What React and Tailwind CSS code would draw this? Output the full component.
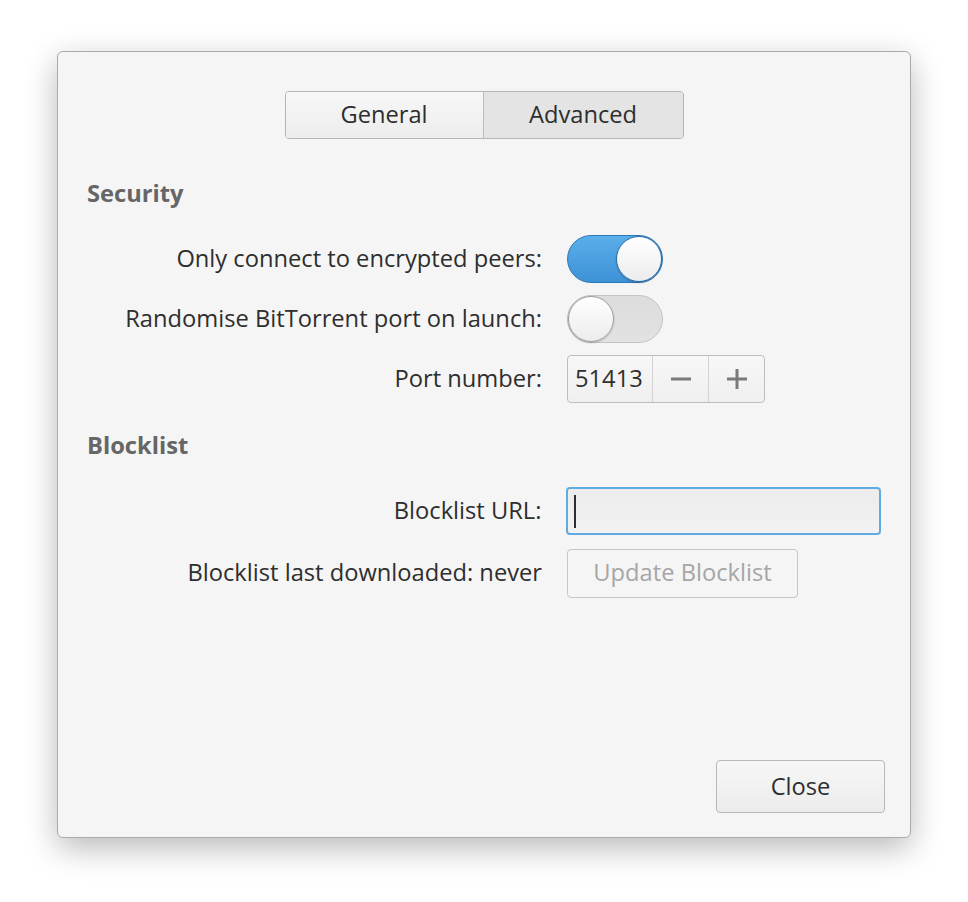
import React, { useState } from 'react';

const font = { fontFamily: '"Open Sans", "Noto Sans", sans-serif' };

function Toggle({ on, onChange }) {
  return (
    <button
      onClick={() => onChange(!on)}
      className={`relative w-[96px] h-[48px] rounded-full border ${
        on
          ? 'bg-gradient-to-b from-[#5aaeea] to-[#3d92d6] border-[#2f78b6]'
          : 'bg-gradient-to-b from-[#dcdcdc] to-[#e2e2e2] border-[#c4c4c4]'
      }`}
    >
      <span
        className={`absolute top-[0px] w-[46px] h-[46px] rounded-full bg-gradient-to-b from-white to-[#ececec] border ${
          on ? 'right-[0px] border-[#2f6ea6]' : 'left-[0px] border-[#9e9e9e]'
        } shadow-[0_1px_2px_rgba(0,0,0,0.2)]`}
      />
    </button>
  );
}

function Row({ label, children }) {
  return (
    <div className="flex items-center h-[48px]">
      <div className="w-[480px] pr-[25px] text-right text-[#2e2e2e] whitespace-nowrap">{label}</div>
      {children}
    </div>
  );
}

export default function App() {
  const [tab, setTab] = useState('advanced');
  const [encrypted, setEncrypted] = useState(true);
  const [randomPort, setRandomPort] = useState(false);
  const [port, setPort] = useState(51413);

  return (
    <div className="w-[968px] h-[902px] bg-white pl-[57px] pt-[51px] text-[23.7px]" style={font}>
      <div className="relative w-[854px] h-[787px] bg-[#f5f5f5] border border-[#aaaaaa] rounded-[6px] shadow-[0_10px_32px_rgba(0,0,0,0.28)] pt-[39px] px-[29px]">
        {/* tabs */}
        <div className="flex justify-center">
          <div className="flex h-[48px] border border-[#b4b4b4] rounded-[4px] overflow-hidden">
            <button
              onClick={() => setTab('general')}
              className={`w-[198px] text-[#2e2e2e] border-r border-[#bcbcbc] ${
                tab === 'general' ? 'bg-[#e4e4e4]' : 'bg-gradient-to-b from-[#f7f7f7] to-[#ededed]'
              }`}
            >
              General
            </button>
            <button
              onClick={() => setTab('advanced')}
              className={`w-[199px] text-[#2e2e2e] ${
                tab === 'advanced' ? 'bg-[#e4e4e4]' : 'bg-gradient-to-b from-[#f7f7f7] to-[#ededed]'
              }`}
            >
              Advanced
            </button>
          </div>
        </div>

        <div className="mt-[38px] font-bold text-[#666666] leading-[32px]">Security</div>

        <div className="mt-[26px] flex flex-col gap-[12px]">
          <Row label="Only connect to encrypted peers:">
            <Toggle on={encrypted} onChange={setEncrypted} />
          </Row>
          <Row label="Randomise BitTorrent port on launch:">
            <Toggle on={randomPort} onChange={setRandomPort} />
          </Row>
          <Row label="Port number:">
            <div className="flex h-[48px] border border-[#bdbdbd] rounded-[4px] overflow-hidden bg-gradient-to-b from-[#f7f7f7] to-[#efefef]">
              <div className="w-[84px] flex items-center pl-[7px] text-[#2e2e2e]">{port}</div>
              <button
                onClick={() => setPort(port - 1)}
                className="w-[56px] border-l border-[#d2d2d2] flex items-center justify-center"
              >
                <svg width="20" height="20" viewBox="0 0 20 20">
                  <rect x="0" y="8.5" width="20" height="3" fill="#7a7a7a" />
                </svg>
              </button>
              <button
                onClick={() => setPort(port + 1)}
                className="w-[56px] border-l border-[#d2d2d2] flex items-center justify-center"
              >
                <svg width="20" height="20" viewBox="0 0 20 20">
                  <rect x="0" y="8.5" width="20" height="3" fill="#7a7a7a" />
                  <rect x="8.5" y="0" width="3" height="20" fill="#7a7a7a" />
                </svg>
              </button>
            </div>
          </Row>
        </div>

        <div className="mt-[26px] font-bold text-[#666666] leading-[32px]">Blocklist</div>

        <div className="mt-[26px] flex flex-col gap-[14px]">
          <Row label="Blocklist URL:">
            <div className="w-[315px] h-[48px] border-2 border-[#62aae2] rounded-[4px] bg-gradient-to-b from-[#ececec] to-[#f2f2f2] flex items-center pl-[6px]">
              <span className="w-[2px] h-[33px] bg-[#2e2e2e]" />
            </div>
          </Row>
          <Row label="Blocklist last downloaded: never">
            <button
              disabled
              className="w-[231px] h-[49px] border border-[#c6c6c6] rounded-[4px] bg-[#f5f5f5] text-[#a6a6a6]"
            >
              Update Blocklist
            </button>
          </Row>
        </div>

        <button className="absolute right-[25px] bottom-[24px] w-[169px] h-[53px] border border-[#b8b8b8] rounded-[4px] bg-gradient-to-b from-[#f7f7f7] to-[#ececec] text-[#2e2e2e]">
          Close
        </button>
      </div>
    </div>
  );
}
